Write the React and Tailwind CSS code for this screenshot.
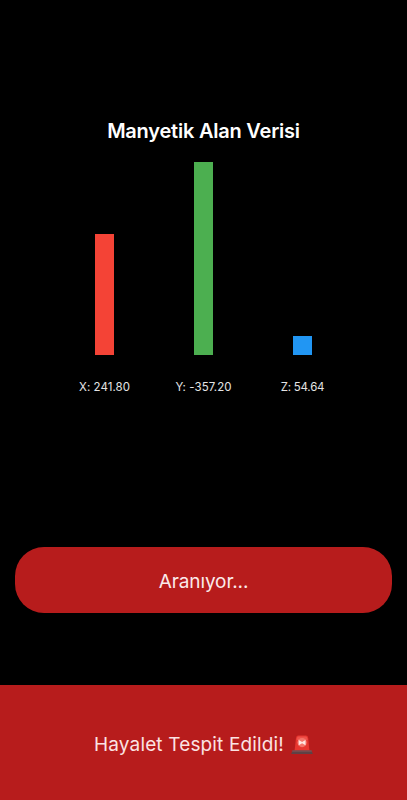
import React from 'react';

const AXES = [
  { axis: 'X', value: 241.8, height: 120.5, color: 'bg-[#f44336]', spacing: 'tracking-[0.05px]' },
  { axis: 'Y', value: -357.2, height: 192.5, color: 'bg-[#4caf50]', spacing: 'tracking-[0.05px]' },
  { axis: 'Z', value: 54.64, height: 18.5, color: 'bg-[#2196f3]', spacing: 'tracking-[-0.25px]' },
];

// Police car light shown next to the alert text
function SirenIcon({ className }) {
  return (
    <svg viewBox="0 0 22 20" className={className} aria-hidden="true">
      <path d="M3.6 15.5 5 2.9Q5.3.5 7.4.5h7.4q2.1 0 2.4 2.4L18.4 15.5Z" fill="#e8362f" />
      <path d="M5.9 3Q6.1 1.4 7.5 1.4h7.2q1.4 0 1.6 1.6l.4 2H5.6Z" fill="#ee514a" />
      <circle cx="11.1" cy="7.6" r="4.6" fill="#f4766c" />
      <path d="M7.7 5 11.1 6.9 14.5 5v5.2L11.1 8.3 7.7 10.2Z" fill="#ffe5e0" />
      <path d="M1.4 15.5h19.2l1.2 3.4H.2Z" fill="#5f4145" />
      <path d="M1.4 15.5h19.2l.3.9H1.1Z" fill="#87595b" />
    </svg>
  );
}

function AxisBar({ axis, value, height, color, spacing }) {
  return (
    <div className="flex flex-col items-center">
      <div className="flex h-[192.5px] items-end">
        <div className={`w-[19.5px] ${color}`} style={{ height }} />
      </div>
      <span className={`mt-6 text-[11.5px] leading-4 whitespace-nowrap text-[#e4e4e4] ${spacing}`}>
        {axis}: {value.toFixed(2)}
      </span>
    </div>
  );
}

export default function App() {
  return (
    <div className="flex h-[800px] w-full flex-col bg-black font-['Inter','Noto_Sans',sans-serif] text-white">
      {/* Magnetic field chart */}
      <div className="flex flex-1 flex-col items-center pt-[117px]">
        <h1 className="text-[20px] leading-7 font-semibold tracking-[-0.22px] whitespace-nowrap">
          Manyetik Alan Verisi
        </h1>
        <div className="mt-[17px] grid grid-cols-[99px_99px_99px]">
          {AXES.map((item) => (
            <AxisBar key={item.axis} {...item} />
          ))}
        </div>
      </div>

      {/* Search button */}
      <button className="mx-[15px] mb-[72px] h-[66px] rounded-[29px] bg-[#b71c1c] pt-[5px] text-[19px] tracking-[-0.1px] text-[#fbeaea]">
        Aranıyor...
      </button>

      {/* Detection banner */}
      <div className="flex h-[115px] items-center justify-center gap-[7px] bg-[#b71c1c] pt-[5px] text-[19px] text-[#fbe3e3]">
        <span className="tracking-[0.15px] whitespace-nowrap">Hayalet Tespit Edildi!</span>
        <SirenIcon className="h-5 w-[22px]" />
      </div>
    </div>
  );
}
